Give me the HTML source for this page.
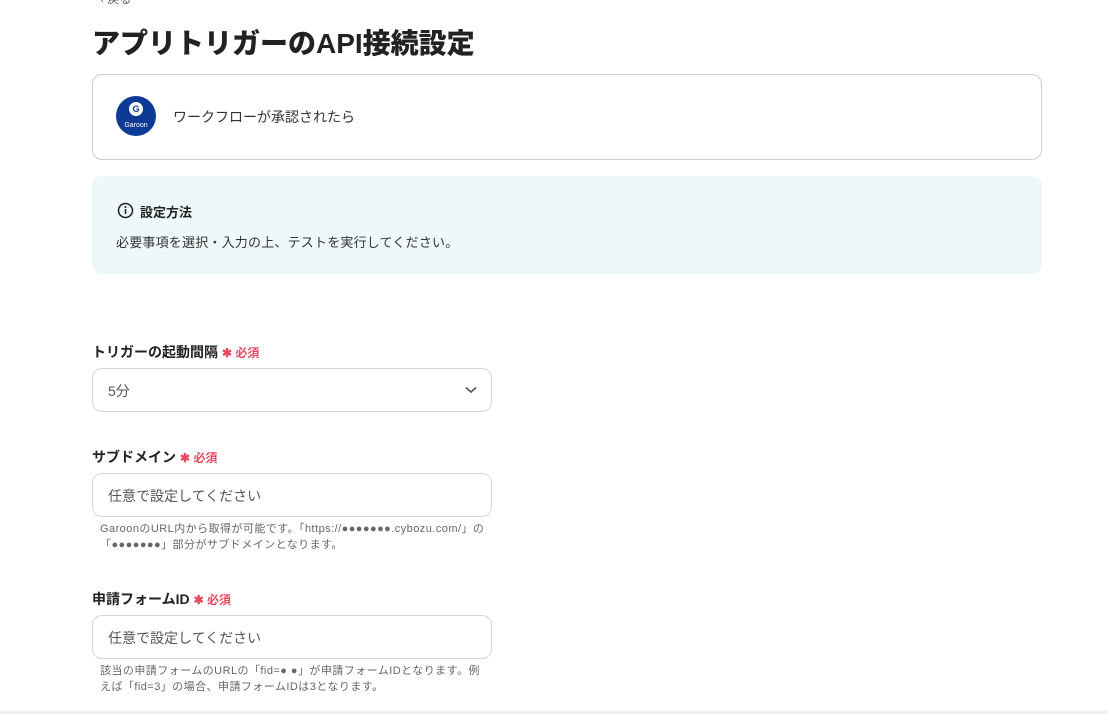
<!DOCTYPE html>
<html><head><meta charset="utf-8"><style>
body{margin:0;width:1108px;height:714px;overflow:hidden;background:#fff;font-family:"Liberation Sans","Noto Sans CJK JP",sans-serif;color:#2b2b2b;position:relative}
.a{position:absolute}
.lbl{font-size:14px;font-weight:bold;color:#222}
.req{color:#e8475f;font-size:12px;font-weight:bold;margin-left:4px}
.box{position:absolute;left:92px;width:398px;height:42px;border:1px solid #d3d6dc;border-radius:10px;font-size:14px;color:#555;box-sizing:content-box}
.box span{position:absolute;left:15px;top:12px}
.help{font-size:11px;color:#666;line-height:16px;left:100px;width:388px;letter-spacing:0.45px}
</style></head><body>
<div class="a" style="left:100px;top:-10px;font-size:12px;color:#666">‹ 戻る</div>
<div class="a" style="left:92px;top:22px;font-size:28px;font-weight:900;color:#222">アプリトリガーのAPI接続設定</div>
<div class="a" style="left:92px;top:74px;width:948px;height:84px;border:1px solid #ccc;border-radius:10px"></div>
<div class="a" style="left:116px;top:96px;width:40px;height:40px;border-radius:50%;background:#0c3a94"></div>
<div class="a" style="left:129px;top:102px;width:14px;height:14px;border-radius:50%;background:#fff;color:#0c3a94;font-size:9px;font-weight:bold;text-align:center;line-height:14px">G</div>
<div class="a" style="left:116px;top:122px;width:40px;text-align:center;color:#fff;font-size:7px">Garoon</div>
<div class="a" style="left:173px;top:107px;font-size:14px;color:#333">ワークフローが承認されたら</div>
<div class="a" style="left:92px;top:176px;width:950px;height:98px;background:#eff8f8;border-radius:10px"></div>
<svg class="a" style="left:117px;top:202px" width="17" height="17" viewBox="0 0 17 17"><circle cx="8.5" cy="8.5" r="7" fill="none" stroke="#222" stroke-width="1.5"/><rect x="7.7" y="7" width="1.6" height="5" fill="#222"/><circle cx="8.5" cy="5" r="1" fill="#222"/></svg>
<div class="a" style="left:140px;top:202px;font-size:13px;font-weight:bold;color:#222">設定方法</div>
<div class="a" style="left:116px;top:232px;font-size:13px;color:#333;letter-spacing:0.2px">必要事項を選択・入力の上、テストを実行してください。</div>
<div class="a lbl" style="left:92px;top:342px">トリガーの起動間隔<span class="req">✱ 必須</span></div>
<div class="box" style="top:368px"><span>5分</span>
<svg class="a" style="right:14px;top:17px" width="12" height="8" viewBox="0 0 12 8"><path d="M1 1.5 L6 6 L11 1.5" fill="none" stroke="#555" stroke-width="1.6"/></svg></div>
<div class="a lbl" style="left:92px;top:447px">サブドメイン<span class="req">✱ 必須</span></div>
<div class="box" style="top:473px"><span>任意で設定してください</span></div>
<div class="a help" style="top:521px">GaroonのURL内から取得が可能です。「https://●●●●●●●.cybozu.com/」の「●●●●●●●」部分がサブドメインとなります。</div>
<div class="a lbl" style="left:92px;top:589px">申請フォームID<span class="req">✱ 必須</span></div>
<div class="box" style="top:615px"><span>任意で設定してください</span></div>
<div class="a help" style="top:663px">該当の申請フォームのURLの「fid=● ●」が申請フォームIDとなります。例えば「fid=3」の場合、申請フォームIDは3となります。</div>
<div class="a" style="left:0;top:711px;width:1108px;height:3px;background:#eee"></div>
</body></html>
